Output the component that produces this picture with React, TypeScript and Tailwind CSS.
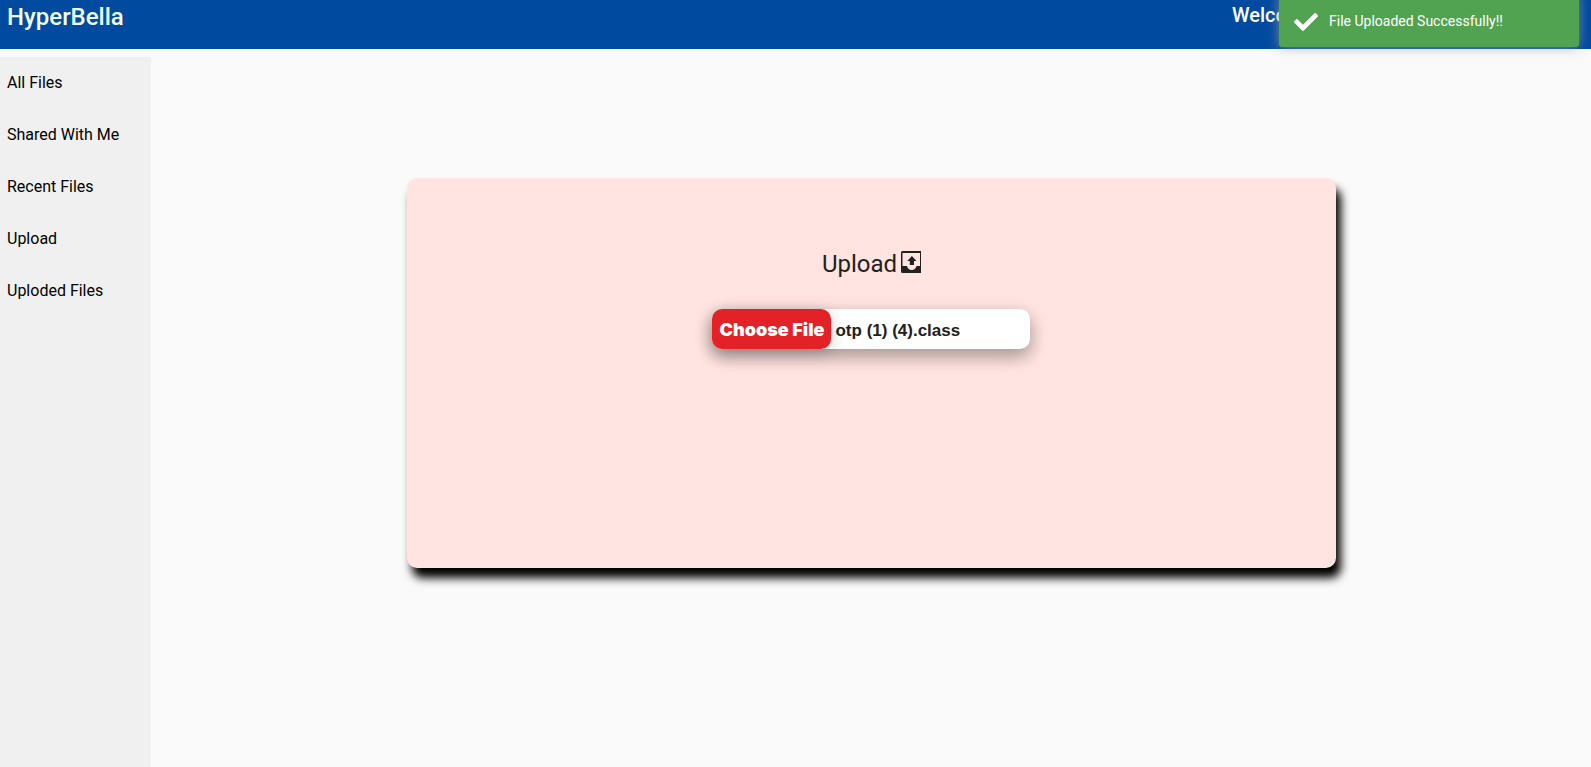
import { useState } from "react";

const links = ["All Files", "Shared With Me", "Recent Files", "Upload", "Uploded Files"];

function Toast() {
  return (
    <div
      role="alert"
      className="absolute -top-1 right-3 flex h-[51px] w-[300px] items-center gap-[11px] rounded-b-[3px] bg-[#51a351] pl-[15px] text-sm text-white shadow-[0_0_12px_rgba(153,153,153,0.8)]"
    >
      <svg viewBox="0 0 512 512" className="size-6" fill="currentColor" aria-hidden="true">
        <path d="M173.898 439.404l-166.4-166.4c-9.997-9.997-9.997-26.206 0-36.204l36.203-36.204c9.997-9.998 26.207-9.998 36.204 0L192 312.69 432.095 72.596c9.997-9.997 26.207-9.997 36.204 0l36.203 36.204c9.997 9.997 9.997 26.206 0 36.204l-294.4 294.401c-9.998 9.997-26.207 9.997-36.204-.001z" />
      </svg>
      <span className="pb-0.5">File Uploaded Successfully!!</span>
    </div>
  );
}

function UploadCard() {
  const [fileName, setFileName] = useState("otp (1) (4).class");
  return (
    <section className="mx-auto mt-[121px] flex h-[390px] w-[64.5%] flex-col items-center rounded-[10px] bg-[#ffe4e1] pt-[70px] shadow-[5px_10px_10px_#000]">
      <h2 className="flex items-center gap-1 text-2xl leading-8 text-[#212121]">
        Upload
        <svg viewBox="0 0 20 22" className="mb-1 h-[22px] w-5" fill="currentColor" aria-hidden="true">
          <path
            fillRule="evenodd"
            d="M1.500 0H20v22H1.500Q0 22 0 20.500V1.500Q0 0 1.500 0zM1.500 2v13H6q1 4 4.700 4T15.500 15H19V2z"
          />
          <path d="M10.900 5L15.500 10h-2.500v4H8.800v-4H6.300z" />
        </svg>
      </h2>
      <label className="mt-[29px] flex h-10 w-[318px] cursor-pointer items-center gap-1 rounded-[10px] bg-white font-['Liberation_Sans',sans-serif] shadow-[0_8px_16px_0_rgba(0,0,0,0.2),0_6px_20px_0_rgba(0,0,0,0.19)]">
        <input
          type="file"
          className="sr-only"
          onChange={(e) => setFileName(e.target.files?.[0]?.name ?? "No file chosen")}
        />
        <span className="flex h-10 w-[119px] items-center justify-center rounded-[10px] bg-[#e32227] pt-0.5 font-['Inter',sans-serif] text-lg font-black text-white shadow-[0_4px_16px_0_rgba(0,0,0,0.2)]">
          Choose File
        </span>
        <span className="pt-1 text-[17px] font-bold text-[#212121]">{fileName}</span>
      </label>
    </section>
  );
}

export default function App() {
  return (
    <div className="relative flex min-h-screen flex-col overflow-hidden bg-[#fafafa] font-['Roboto',sans-serif]">
      <header className="flex h-[49px] justify-between bg-[#004a9f] pl-[7px]">
        <h1 className="text-2xl leading-[34px] font-medium text-[#f0fff0]">HyperBella</h1>
        <p className="w-[359px] text-xl leading-[30px] font-medium text-white">Welcome</p>
      </header>
      <div className="flex grow">
        <nav className="mt-2 w-[151px] bg-[#f0f0f0] pt-[14px] pl-[7px]">
          <ul className="flex flex-col gap-7">
            {links.map((link) => (
              <li key={link}>
                <a href="#" className="block text-base text-black">
                  {link}
                </a>
              </li>
            ))}
          </ul>
        </nav>
        <main className="grow pt-2 pl-px">
          <UploadCard />
        </main>
      </div>
      <Toast />
    </div>
  );
}
